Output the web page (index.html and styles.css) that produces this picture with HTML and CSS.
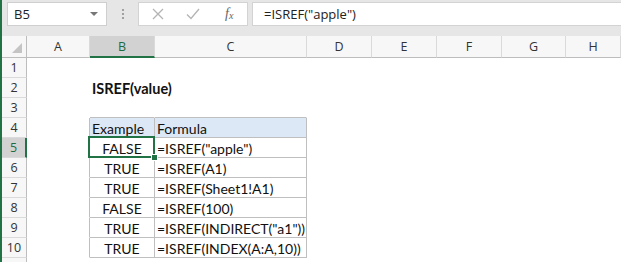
FILE: index.html
```html
<!DOCTYPE html>
<html>
<head>
<meta charset="utf-8">
<link rel="stylesheet" href="styles.css">
</head>
<body>
<div class="app">
  <div class="fbar">
    <div class="namebox"><span class="ref">B5</span><span class="drop"></span></div>
    <div class="dots"><i></i><i></i><i></i></div>
    <div class="btns">
      <svg class="ic" width="12" height="12" viewBox="0 0 12 12"><path d="M1 1L11 11M11 1L1 11" stroke="#b4b4b4" stroke-width="1.3" fill="none"/></svg>
      <svg class="ic" width="14" height="12" viewBox="0 0 14 12"><path d="M1 6.5L5 10.5L13 1" stroke="#b4b4b4" stroke-width="1.3" fill="none"/></svg>
      <span class="fx">f<sub>x</sub></span>
    </div>
    <div class="finput">=ISREF("apple")</div>
  </div>
  <div class="sheet">
    <div class="ch corner"><span class="tri"></span></div>
    <div class="ch">A</div>
    <div class="ch sel">B</div>
    <div class="ch">C</div>
    <div class="ch">D</div>
    <div class="ch">E</div>
    <div class="ch">F</div>
    <div class="ch">G</div>
    <div class="ch">H</div>

    <div class="rh">1</div><div class="c"></div><div class="c"></div><div class="c"></div><div class="c"></div><div class="c"></div><div class="c"></div><div class="c"></div><div class="c"></div>
    <div class="rh">2</div><div class="c"></div><div class="c title">ISREF(value)</div><div class="c"></div><div class="c"></div><div class="c"></div><div class="c"></div><div class="c"></div><div class="c"></div>
    <div class="rh">3</div><div class="c"></div><div class="c tb-above"></div><div class="c tb-above"></div><div class="c"></div><div class="c"></div><div class="c"></div><div class="c"></div><div class="c"></div>
    <div class="rh">4</div><div class="c tb-left"></div><div class="c t hd">Example</div><div class="c t hd">Formula</div><div class="c"></div><div class="c"></div><div class="c"></div><div class="c"></div><div class="c"></div>
    <div class="rh rsel">5</div><div class="c tb-left"></div><div class="c t mid active">FALSE</div><div class="c t">=ISREF("apple")</div><div class="c"></div><div class="c"></div><div class="c"></div><div class="c"></div><div class="c"></div>
    <div class="rh">6</div><div class="c tb-left"></div><div class="c t mid">TRUE</div><div class="c t">=ISREF(A1)</div><div class="c"></div><div class="c"></div><div class="c"></div><div class="c"></div><div class="c"></div>
    <div class="rh">7</div><div class="c tb-left"></div><div class="c t mid">TRUE</div><div class="c t">=ISREF(Sheet1!A1)</div><div class="c"></div><div class="c"></div><div class="c"></div><div class="c"></div><div class="c"></div>
    <div class="rh">8</div><div class="c tb-left"></div><div class="c t mid">FALSE</div><div class="c t">=ISREF(100)</div><div class="c"></div><div class="c"></div><div class="c"></div><div class="c"></div><div class="c"></div>
    <div class="rh">9</div><div class="c tb-left"></div><div class="c t mid">TRUE</div><div class="c t">=ISREF(INDIRECT("a1"))</div><div class="c"></div><div class="c"></div><div class="c"></div><div class="c"></div><div class="c"></div>
    <div class="rh">10</div><div class="c tb-left"></div><div class="c t mid">TRUE</div><div class="c t">=ISREF(INDEX(A:A,10))</div><div class="c"></div><div class="c"></div><div class="c"></div><div class="c"></div><div class="c"></div>
    <div class="rh"></div><div class="c"></div><div class="c"></div><div class="c"></div><div class="c"></div><div class="c"></div><div class="c"></div><div class="c"></div><div class="c"></div>
  </div>
</div>
</body>
</html>
```
FILE: styles.css
```css
html, body { margin: 0; padding: 0; background: #fff; }
body { width: 621px; height: 262px; overflow: hidden; }
.app {
  border-left: 2px solid #217346;
  height: 262px;
  box-sizing: border-box;
  overflow: hidden;
}
.fbar {
  height: 36px;
  background: #e6e6e6;
  display: flex;
  align-items: flex-start;
  padding-top: 2px;
  box-sizing: border-box;
  font-family: "Open Sans", "Liberation Sans", sans-serif;
}
.namebox {
  margin-left: 5px;
  width: 100px;
  height: 24px;
  background: #fff;
  border: 1px solid #cfcfcf;
  box-sizing: border-box;
  display: flex;
  align-items: center;
  justify-content: space-between;
  padding: 0 8px 0 6px;
  font-size: 13px;
  color: #222;
}
.drop {
  width: 0; height: 0;
  border-left: 4px solid transparent;
  border-right: 4px solid transparent;
  border-top: 4px solid #777;
}
.dots {
  width: 31px;
  display: flex;
  flex-direction: column;
  align-items: center;
  gap: 2px;
  padding-top: 7px;
}
.dots i { display: block; width: 2px; height: 2px; background: #a0a0a0; }
.btns {
  width: 110px;
  height: 24px;
  background: #fff;
  border: 1px solid #d3d3d3;
  box-sizing: border-box;
  display: flex;
  align-items: center;
  padding-left: 13px;
  gap: 22px;
}
.fx {
  font-family: "Liberation Serif", serif;
  font-style: italic;
  font-size: 14px;
  color: #666;
  margin-left: 3px;
}
.fx sub { font-size: 10px; vertical-align: -1px; }
.finput {
  margin-left: 4px;
  flex: 1;
  height: 24px;
  background: #fff;
  border: 1px solid #d3d3d3;
  border-right: none;
  box-sizing: border-box;
  padding-left: 11px;
  font-size: 13px;
  line-height: 22px;
  color: #222;
}
.sheet {
  display: grid;
  grid-template-columns: 25px 63px 65px 152px 65px 65px 65px 64px 1fr;
  grid-template-rows: 22px;
  grid-auto-rows: 20px;
  font-family: "Lato", "Liberation Sans", sans-serif;
  font-size: 14px;
  color: #111;
}
.ch {
  background: #f7f7f7;
  border-bottom: 1px solid #bdbdbd;
  border-right: 1px solid #dadada;
  box-sizing: border-box;
  text-align: center;
  font-family: "Open Sans", "Liberation Sans", sans-serif;
  font-size: 12.5px;
  line-height: 21px;
  color: #333;
}
.ch.corner { position: relative; border-right-color: #bdbdbd; }
.tri {
  position: absolute;
  right: 4px; bottom: 4px;
  width: 0; height: 0;
  border-left: 10px solid transparent;
  border-bottom: 10px solid #c4c4c4;
}
.ch.sel {
  background: #d2d2d2;
  color: #1e6b40;
  border-bottom: 2px solid #217346;
}
.rh {
  background: #f7f7f7;
  border-right: 1px solid #bdbdbd;
  border-bottom: 1px solid #dadada;
  box-sizing: border-box;
  text-align: center;
  font-family: "Open Sans", "Liberation Sans", sans-serif;
  font-size: 12.5px;
  line-height: 20px;
  color: #333;
}
.rh.rsel {
  background: #d2d2d2;
  color: #1e6b40;
  border-right: 2px solid #217346;
}
.c {
  border-right: 1px solid #fff;
  border-bottom: 1px solid #fff;
  box-sizing: border-box;
  white-space: nowrap;
  line-height: 21px;
  padding-left: 2px;
}
.title { font-weight: bold; font-size: 14.5px; }
.tb-above { border-bottom-color: #bfbfbf; }
.tb-left { border-right-color: #bfbfbf; }
.t { border-right-color: #bfbfbf; border-bottom-color: #bfbfbf; }
.hd { background: #dde8f6; }
.mid { text-align: center; padding-left: 0; }
.active { position: relative; }
.active::after {
  content: "";
  position: absolute;
  left: -2px; top: -2px; right: -1px; bottom: -1px;
  border: 2px solid #217346;
}
.active::before {
  content: "";
  position: absolute;
  right: -4px; bottom: -4px;
  width: 5px; height: 5px;
  background: #217346;
  border: 1px solid #fff;
  z-index: 2;
}
```
